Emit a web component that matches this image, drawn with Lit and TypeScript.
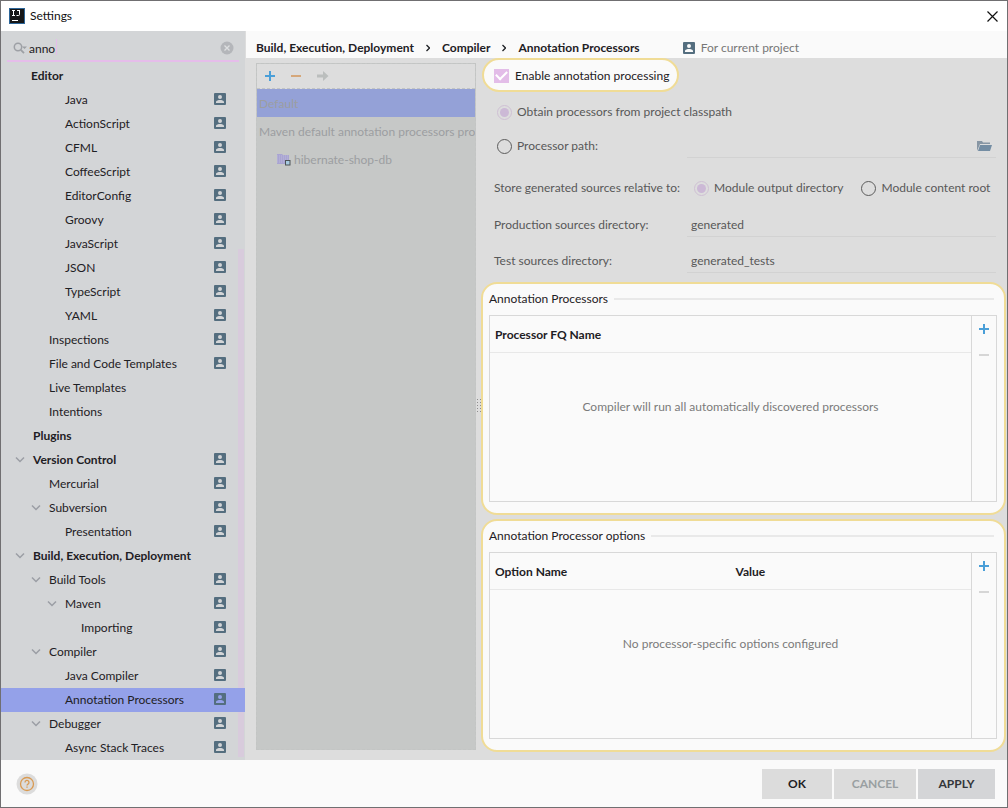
import { LitElement, html, css, svg, nothing } from "lit";
import { customElement, property } from "lit/decorators.js";
import { classMap } from "lit/directives/class-map.js";

interface TreeItem {
  label: string;
  level: number;
  bold?: boolean;
  open?: boolean;
  project?: boolean;
  selected?: boolean;
}

const leaf = (label: string, level: number, project = true): TreeItem => ({ label, level, project });
const branch = (label: string, level: number): TreeItem => ({ label, level, open: true, project: true });

const TREE: TreeItem[] = [
  { label: "Editor", level: 0, bold: true },
  leaf("Java", 3),
  leaf("ActionScript", 3),
  leaf("CFML", 3),
  leaf("CoffeeScript", 3),
  leaf("EditorConfig", 3),
  leaf("Groovy", 3),
  leaf("JavaScript", 3),
  leaf("JSON", 3),
  leaf("TypeScript", 3),
  leaf("YAML", 3),
  leaf("Inspections", 2),
  leaf("File and Code Templates", 2),
  leaf("Live Templates", 2, false),
  leaf("Intentions", 2, false),
  { label: "Plugins", level: 1, bold: true },
  { label: "Version Control", level: 1, bold: true, open: true, project: true },
  leaf("Mercurial", 2),
  branch("Subversion", 2),
  leaf("Presentation", 3),
  { label: "Build, Execution, Deployment", level: 1, bold: true, open: true },
  branch("Build Tools", 2),
  branch("Maven", 3),
  leaf("Importing", 4),
  branch("Compiler", 2),
  leaf("Java Compiler", 3),
  { label: "Annotation Processors", level: 3, project: true, selected: true },
  branch("Debugger", 2),
  leaf("Async Stack Traces", 3),
];

const projectIcon = svg`<svg width="12" height="12" viewBox="0 0 12 12" aria-hidden="true">
  <path fill="#546e7f" fill-rule="evenodd" d="M1 0h10a1 1 0 0 1 1 1v10a1 1 0 0 1-1 1H1a1 1 0 0 1-1-1V1a1 1 0 0 1 1-1zM6 2a2 2 0 1 0 0 4a2 2 0 1 0 0-4zM2 10h8V9C10 7.600 7.500 7 6 7S2 7.600 2 9z"/></svg>`;

const plusIcon = svg`<svg width="10" height="10" viewBox="0 0 10 10" aria-hidden="true"><path d="M5 0v10M0 5h10" stroke="#4a9fd8" stroke-width="2"/></svg>`;
const minusIcon = (color: string) =>
  svg`<svg width="10" height="10" viewBox="0 0 10 10" aria-hidden="true"><path d="M0 5h10" stroke="${color}" stroke-width="2"/></svg>`;

const base = css`
  * { box-sizing: border-box; }
  svg { display: block; flex: none; }
  button { font: inherit; color: inherit; border: 0; padding: 0; background: none; }
`;

@customElement("settings-tree")
class SettingsTree extends LitElement {
  static styles = [base, css`
    :host { display: block; position: relative; background: #d3d5d7; }
    .search { display: flex; align-items: center; margin: 0 6px; height: 31px; padding: 5px 5px 0 6px; border-bottom: 2px solid #e5bdea; }
    .field { position: relative; display: flex; flex: 1; }
    input { flex: 1; min-width: 0; border: 0; padding: 1px 0 0 1px; background: none; font: inherit; color: #1e2024; outline: 0; height: 18px; }
    .caret { position: absolute; left: 28px; top: 0; width: 1px; height: 16px; background: #e5bdea; }
    ul { list-style: none; margin: 2px 0 0; padding: 0; }
    .row { display: flex; align-items: center; height: 24px; padding-right: 19px; color: #1e2024; }
    .row > svg { margin-bottom: 2px; }
    .l0 { padding-left: 14px; }
    .l1 { padding-left: 16px; }
    .l2 { padding-left: 32px; }
    .l3 { padding-left: 48px; }
    .l4 { padding-left: 64px; }
    .arrow { width: 16px; flex: none; }
    .arrow svg { margin-left: -2px; }
    .label { flex: 1; white-space: nowrap; }
    .bold { font-weight: 700; }
    .selected { position: relative; background: #94a1e9; }
    .thumb { position: absolute; right: 1px; top: 218px; bottom: 3px; width: 6px; background: #d8cbdc; }
  `];

  render() {
    return html`
      <div class="search">
        <svg width="15" height="13" viewBox="0 0 15 13" aria-hidden="true">
          <circle cx="5" cy="5" r="3.7" fill="none" stroke="#9da0a5" stroke-width="1.500"/>
          <path d="M7.800 7.800L11 11.200" stroke="#9da0a5" stroke-width="1.800"/>
          <path d="M9 4.500h5L11.500 7z" fill="#9da0a5"/>
        </svg>
        <div class="field">
          <input aria-label="Search settings" value="anno" />
          <span class="caret"></span>
        </div>
        <button aria-label="Clear">
          <svg width="14" height="14" viewBox="0 0 14 14"><circle cx="7" cy="7" r="6.500" fill="#b4b6ba"/><path d="M4.500 4.500l5 5M9.500 4.500l-5 5" stroke="#dddfe1" stroke-width="1.300"/></svg>
        </button>
      </div>
      <span class="thumb"></span>
      <ul>
        ${TREE.map((item) => html`
          <li class=${classMap({ row: true, selected: !!item.selected, ["l" + item.level]: true })}>
            <span class="arrow">${item.open
              ? html`<svg width="10" height="8" viewBox="0 0 10 8"><path d="M1 1.500l4 4l4-4" fill="none" stroke="#9b9ea5" stroke-width="1.500"/></svg>`
              : nothing}</span>
            <span class=${classMap({ label: true, bold: !!item.bold })}>${item.label}</span>
            ${item.project ? projectIcon : nothing}
          </li>`)}
      </ul>
    `;
  }
}

@customElement("profile-list")
class ProfileList extends LitElement {
  static styles = [base, css`
    :host { display: flex; flex-direction: column; background: #c6c8c7; border: 1px dashed #c3c5c4; overflow: hidden; color: #9c9ea1; }
    .tools { display: flex; align-items: center; gap: 16px; height: 25px; padding: 0 8px; background: #dddddd; border-bottom: 1px dashed #c3c5c4; }
    .row { display: flex; align-items: center; height: 28px; padding: 1px 0 0 2px; white-space: nowrap; }
    .selected { background: #94a1d7; }
    .module { padding-left: 20px; gap: 3px; }
  `];

  render() {
    return html`
      <div class="tools">
        <button aria-label="Add">${plusIcon}</button>
        <button aria-label="Remove">${minusIcon("#d5a77a")}</button>
        <button aria-label="Move to">
          <svg width="12" height="10" viewBox="0 0 12 10"><path d="M0 3.500h6V0l5.500 5L6 10V6.500H0z" fill="#bbbebd"/></svg>
        </button>
      </div>
      <div class="row selected">Default</div>
      <div class="row">Maven default annotation processors pro</div>
      <div class="row module">
        <svg width="14" height="13" viewBox="0 0 14 13" aria-hidden="true">
          <path d="M0 1h5l1 1h6v9H0z" fill="#a9a4d2"/>
          <path d="M0 3h12M0 5h12M0 7h12M0 9h12" stroke="#bcbada" stroke-dasharray="1 1"/>
          <rect x="8.500" y="7.500" width="4.500" height="4.500" fill="#a7cbe0" stroke="#4d5357"/>
        </svg>
        <span>hibernate-shop-db</span>
      </div>
    `;
  }
}

@customElement("options-panel")
class OptionsPanel extends LitElement {
  @property() heading = "";
  @property() empty = "";
  @property({ type: Array }) columns: string[] = [];

  static styles = [base, css`
    :host { display: flex; flex-direction: column; background: #fafafa; border: 2px solid #f0dc96; border-radius: 16px; padding: 5px 7px 11px 6px; color: #1e2024; }
    h2 { display: flex; align-items: center; gap: 6px; margin: 0; height: 20px; padding-right: 3px; font-size: 12px; font-weight: 400; }
    h2::after { content: ""; flex: 1; height: 2px; background: #e9e9e9; }
    .frame { display: flex; flex: 1; margin-top: 6px; border: 1px solid #d8d8d8; }
    .grid { flex: 1; }
    table { width: 100%; height: 100%; border-collapse: collapse; table-layout: fixed; }
    th { height: 36px; padding: 2px 5px 0; text-align: left; font-weight: 700; border-bottom: 1px solid #e8e8e8; }
    td { padding: 46px 0 0; text-align: center; vertical-align: top; color: #7b7b7b; }
    .tools { width: 25px; display: flex; flex-direction: column; align-items: center; gap: 16px; padding-top: 8px; border-left: 1px solid #d8d8d8; }
  `];

  render() {
    return html`
      <h2>${this.heading}</h2>
      <div class="frame">
        <div class="grid">
          <table>
            <thead><tr>${this.columns.map((c) => html`<th>${c}</th>`)}</tr></thead>
            <tbody><tr><td colspan=${this.columns.length}>${this.empty}</td></tr></tbody>
          </table>
        </div>
        <div class="tools">
          <button aria-label="Add">${plusIcon}</button>
          <button aria-label="Remove">${minusIcon("#d6d6d6")}</button>
        </div>
      </div>
    `;
  }
}

@customElement("app-root")
class AppRoot extends LitElement {
  static styles = [base, css`
    :host { box-sizing: border-box; display: flex; flex-direction: column; min-height: 100vh; border: 1px solid #706f71; background: #fafafa; font: 12px/16px Lato, "Open Sans", sans-serif; color: #1e2024; }
    .title { display: flex; align-items: center; height: 30px; padding: 0 9px 0 8px; gap: 5px; background: #ffffff; color: #111111; }
    .title span { flex: 1; }
    .content { display: grid; grid-template-columns: 244px minmax(0, 1fr); flex: 1; }
    .page { display: flex; flex-direction: column; background: #dddddd; }
    .crumbs { display: flex; align-items: center; height: 27px; padding: 6px 10px 0; margin-left: 1px; gap: 12px; background: #fafafa; font-weight: 700; white-space: nowrap; }
    .scope { display: flex; align-items: center; gap: 6px; margin-left: 31px; font-weight: 400; color: #777777; }
    .split { display: grid; grid-template-columns: 220px 5px minmax(0, 1fr); flex: 1; padding: 0 1px 8px 11px; }
    profile-list { margin: 5px 0 2px; }
    .grip { align-self: center; width: 5px; height: 14px; background: radial-gradient(circle, #8e8e8e 1px, transparent 1px) 0 0 / 3px 3px; }
    .form { display: flex; flex-direction: column; color: #585858; }
    .enable { align-self: flex-start; display: flex; align-items: center; gap: 6px; height: 34px; margin-left: 1px; padding: 1px 8px 0 10px; border: 2px solid #f0dc96; border-radius: 17px; background: #fafafa; color: #1e2024; }
    .enable input { appearance: none; width: 15px; height: 14px; margin: 0; background: #e3bde8; display: grid; place-items: center; }
    .enable input::after { content: ""; width: 9px; height: 5px; border: solid #ffffff; border-width: 0 0 2px 2px; transform: rotate(-45deg) translate(1px, -1px); }
    .radio { display: flex; align-items: center; gap: 5px; white-space: nowrap; }
    .radio input { appearance: none; width: 15px; height: 15px; margin: 0; border: 1px solid #5c5c5c; border-radius: 50%; display: grid; place-items: center; }
    .radio input:checked { border-color: #cfc0d4; }
    .radio input:checked::after { content: ""; width: 9px; height: 9px; border-radius: 50%; background: #ccb9d6; }
    .fields { display: flex; flex-direction: column; padding: 10px 10px 9px 16px; }
    .fields > .radio { height: 20px; }
    .line { display: grid; grid-template-columns: 190px minmax(0, 1fr); align-items: center; }
    .line label, .line .name { white-space: nowrap; }
    .path { margin-top: 12px; height: 23px; }
    .store { margin: 19px 0 13px; height: 24px; }
    .box { display: flex; align-items: center; height: 24px; border-bottom: 1px solid #d2d2d2; padding: 0 4px; }
    .box input { flex: 1; min-width: 0; border: 0; padding: 1px 0 0; background: none; font: inherit; color: inherit; outline: 0; }
    .gap { margin-bottom: 12px; }
    .line.shift { margin-left: -3px; grid-template-columns: 193px minmax(0, 1fr); }
    .choices { display: flex; gap: 18px; padding-left: 7px; }
    .panels { display: flex; flex-direction: column; flex: 1; gap: 4px; }
    options-panel { flex: 1; }
    .footer { display: flex; align-items: center; height: 47px; padding: 0 12px 0 15px; gap: 2px; background: #fafafa; }
    .help { margin-right: auto; }
    .btn { height: 30px; background: #dcdcdc; font-weight: 700; }
    .ok { width: 70px; }
    .cancel { width: 82px; color: #999fa1; }
    .apply { width: 77px; background: #d4d5d7; color: #33363a; }
  `];

  render() {
    const chevron = html`<svg width="4" height="8" viewBox="0 0 4 8"><path d="M0.500 1l3 3l-3 3" fill="none" stroke="#1e2024" stroke-width="1.300"/></svg>`;
    return html`
      <div class="title">
        <svg width="16" height="16" viewBox="0 0 16 16" aria-hidden="true">
          <rect x="0.500" y="0.500" width="15" height="15" fill="#161617" stroke="#2d6699"/>
          <path d="M3 2.500h3M3 7.500h3M4.500 2.500v5M8 2.500h3M10.500 2.500v4q0 1-1 1H7.500M3 12.500h6" fill="none" stroke="#ffffff" stroke-width="1"/>
        </svg>
        <span>Settings</span>
        <button aria-label="Close"><svg width="11" height="11" viewBox="0 0 11 11"><path d="M0.500 0.500l10 10M10.500 0.500l-10 10" stroke="#111111" stroke-width="1.200"/></svg></button>
      </div>
      <div class="content">
        <settings-tree></settings-tree>
        <div class="page">
          <div class="crumbs">
            <span>Build, Execution, Deployment</span>${chevron}<span>Compiler</span>${chevron}<span>Annotation Processors</span>
            <span class="scope">${projectIcon}<span>For current project</span></span>
          </div>
          <div class="split">
            <profile-list></profile-list>
            <div class="grip"></div>
            <div class="form">
              <label class="enable"><input type="checkbox" checked />Enable annotation processing</label>
              <div class="fields">
                <label class="radio"><input type="radio" name="source" checked />Obtain processors from project classpath</label>
                <div class="line path">
                  <label class="radio"><input type="radio" name="source" />Processor path:</label>
                  <div class="box">
                    <input aria-label="Processor path" />
                    <button aria-label="Browse"><svg width="15" height="12" viewBox="0 0 15 12"><path d="M0 11V1h5l1 1.500h7V4H3z" fill="#8796a4"/><path d="M3 5h12l-2 6H1z" fill="#748da3"/></svg></button>
                  </div>
                </div>
                <div class="line shift store">
                  <span class="name">Store generated sources relative to:</span>
                  <div class="choices">
                    <label class="radio"><input type="radio" name="relative" checked />Module output directory</label>
                    <label class="radio"><input type="radio" name="relative" />Module content root</label>
                  </div>
                </div>
                <div class="line shift gap">
                  <label for="production">Production sources directory:</label>
                  <div class="box"><input id="production" value="generated" /></div>
                </div>
                <div class="line shift">
                  <label for="test">Test sources directory:</label>
                  <div class="box"><input id="test" value="generated_tests" /></div>
                </div>
              </div>
              <div class="panels">
                <options-panel heading="Annotation Processors" .columns=${["Processor FQ Name"]} empty="Compiler will run all automatically discovered processors"></options-panel>
                <options-panel heading="Annotation Processor options" .columns=${["Option Name", "Value"]} empty="No processor-specific options configured"></options-panel>
              </div>
            </div>
          </div>
        </div>
      </div>
      <div class="footer">
        <button class="help" aria-label="Help">
          <svg width="22" height="22" viewBox="0 0 22 22"><circle cx="11" cy="11" r="10.500" fill="#dcdcdc"/><circle cx="11" cy="11" r="6.500" fill="none" stroke="#d99a52" stroke-width="1.300"/><path d="M9 9.500a2 2 0 1 1 3 1.600q-1 .6-1 1.400M11 13.500v1.300" fill="none" stroke="#d99a52" stroke-width="1.300"/></svg>
        </button>
        <button class="btn ok">OK</button>
        <button class="btn cancel">CANCEL</button>
        <button class="btn apply">APPLY</button>
      </div>
    `;
  }
}
